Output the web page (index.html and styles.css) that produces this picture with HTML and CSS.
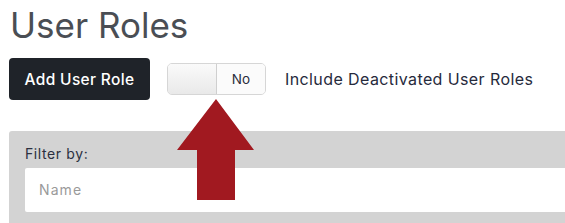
FILE: index.html
```html
<!DOCTYPE html>
<html>
<head>
<meta charset="utf-8">
<link rel="stylesheet" href="styles.css">
</head>
<body>
<div class="page">
  <h1 class="title">User Roles</h1>
  <div class="toolbar">
    <button class="btn-add">Add User Role</button>
    <div class="toggle">
      <span class="toggle-off"></span>
      <span class="toggle-on">No</span>
    </div>
    <span class="toggle-label">Include Deactivated User Roles</span>
  </div>
  <div class="filter-panel">
    <label class="filter-label">Filter by:</label>
    <div class="filter-input">Name</div>
  </div>
</div>
<svg class="arrow" width="80" height="104" viewBox="0 0 80 104">
  <polygon points="39,0 77,51 58,51 58,101 20,101 20,51 0,51" fill="#a11920"/>
</svg>
</body>
</html>
```
FILE: styles.css
```css
html, body {
  margin: 0;
  padding: 0;
  background: #fff;
  overflow: hidden;
}
body {
  font-family: Inter, "Open Sans", "Liberation Sans", sans-serif;
  position: relative;
  width: 565px;
  height: 223px;
}
.page {
  padding-left: 9px;
}
.title {
  margin: 0;
  padding-top: 2px;
  height: 50px;
  font-weight: 400;
  font-size: 35px;
  line-height: 46px;
  color: #4a4e54;
  padding-left: 1px;
}
.toolbar {
  display: flex;
  align-items: center;
  height: 42px;
  margin-top: 6px;
}
.btn-add {
  width: 141px;
  height: 42px;
  background: #1f2329;
  color: #fff;
  border: none;
  border-radius: 4px;
  font-family: inherit;
  font-size: 15.5px;
  font-weight: 500;
  letter-spacing: 0.35px;
  padding: 0;
}
.toggle {
  margin-left: 17px;
  width: 99px;
  height: 32px;
  box-sizing: border-box;
  border: 1px solid #d6d6d6;
  border-radius: 5px;
  display: flex;
  overflow: hidden;
  background: linear-gradient(#ffffff, #ececec);
}
.toggle-off {
  width: 48px;
  border-right: 1px solid #cfcfcf;
  background: linear-gradient(#fafafa, #e9e9e9);
}
.toggle-on {
  flex: 1;
  display: flex;
  align-items: center;
  justify-content: center;
  font-size: 13.5px;
  color: #2b2e3c;
  background: #fbfbfb;
}
.toggle-label {
  margin-left: 19px;
  font-size: 16px;
  letter-spacing: 0.4px;
  color: #262a3c;
}
.filter-panel {
  margin-top: 31px;
  background: #d3d3d3;
  border-radius: 3px 0 0 0;
  padding: 11px 0 11px 16px;
  height: 92px;
  box-sizing: border-box;
}
.filter-label {
  display: block;
  font-size: 14px;
  letter-spacing: 0.6px;
  color: #2b3040;
  height: 26px;
  line-height: 24px;
}
.filter-input {
  background: #fff;
  height: 44px;
  border-radius: 2px 0 0 2px;
  padding-left: 14px;
  line-height: 44px;
  font-size: 14px;
  color: #9a9a9a;
  letter-spacing: 1.1px;
}
.arrow {
  position: absolute;
  left: 177px;
  top: 99px;
}
```
